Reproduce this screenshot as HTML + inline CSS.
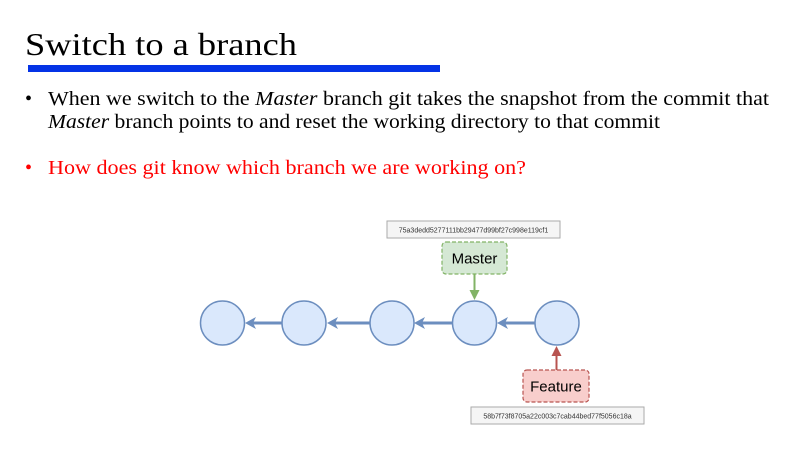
<!DOCTYPE html>
<html><head><style>
html,body{margin:0;padding:0;background:#fff;width:800px;height:450px;overflow:hidden}
</style></head><body>
<svg width="800" height="450" xmlns="http://www.w3.org/2000/svg" font-family="Liberation Serif, serif">
<text x="25" y="55" font-size="32" fill="#000" textLength="272" lengthAdjust="spacingAndGlyphs">Switch to a branch</text>
<rect x="28" y="65" width="412" height="7" fill="#0433e6"/>
<text x="25" y="105" font-size="20" fill="#000">•</text>
<text x="48" y="105" font-size="19.5" fill="#000" textLength="721" lengthAdjust="spacingAndGlyphs">When we switch to the <tspan font-style="italic">Master</tspan> branch git takes the snapshot from the commit that</text>
<text x="48" y="128" font-size="19.5" fill="#000" textLength="612" lengthAdjust="spacingAndGlyphs"><tspan font-style="italic">Master</tspan> branch points to and reset the working directory to that commit</text>
<text x="25" y="174" font-size="20" fill="#f00">•</text>
<text x="48" y="174" font-size="19.5" fill="#f00" textLength="478" lengthAdjust="spacingAndGlyphs">How does git know which branch we are working on?</text>

<g font-family="Liberation Sans, sans-serif">
<rect x="387" y="221" width="173" height="17" fill="#f5f5f5" stroke="#aaa"/>
<text x="473.5" y="232.5" font-size="7" text-anchor="middle" fill="#333">75a3dedd5277111bb29477d99bf27c998e119cf1</text>
<rect x="442" y="242" width="65" height="32" rx="4" fill="#d5e8d4" stroke="#82b366" stroke-dasharray="4 2" stroke-width="1.2"/>
<text x="474.5" y="263.5" font-size="15" text-anchor="middle" fill="#000">Master</text>
<line x1="474.5" y1="274" x2="474.5" y2="294" stroke="#82b366" stroke-width="2"/>
<polygon points="469.5,290 479.5,290 474.5,300" fill="#82b366"/>

<rect x="523" y="370" width="66" height="32" rx="4" fill="#f8cecc" stroke="#b85450" stroke-dasharray="4 2" stroke-width="1.2"/>
<text x="556" y="391.5" font-size="15" text-anchor="middle" fill="#000">Feature</text>
<line x1="556.5" y1="370" x2="556.5" y2="352" stroke="#b85450" stroke-width="2"/>
<polygon points="551.5,356 561.5,356 556.5,346" fill="#b85450"/>
<rect x="471" y="407" width="173" height="17" fill="#f5f5f5" stroke="#aaa"/>
<text x="557.5" y="418.5" font-size="7" text-anchor="middle" fill="#333">58b7f73f8705a22c003c7cab44bed77f5056c18a</text>
</g>

<g stroke="#6c8ebf" stroke-width="3" fill="#6c8ebf">
<line x1="282" y1="323" x2="252" y2="323"/><polygon points="245,323 256,317 253,323 256,329" stroke="none"/>
<line x1="370" y1="323" x2="334" y2="323"/><polygon points="327,323 338,317 335,323 338,329" stroke="none"/>
<line x1="452" y1="323" x2="421" y2="323"/><polygon points="414,323 425,317 422,323 425,329" stroke="none"/>
<line x1="535" y1="323" x2="504" y2="323"/><polygon points="497,323 508,317 505,323 508,329" stroke="none"/>
</g>
<g fill="#dae8fc" stroke="#6c8ebf" stroke-width="1.5">
<circle cx="222.5" cy="323" r="22"/>
<circle cx="304" cy="323" r="22"/>
<circle cx="392" cy="323" r="22"/>
<circle cx="474.5" cy="323" r="22"/>
<circle cx="557" cy="323" r="22"/>
</g>
</svg>
</body></html>
